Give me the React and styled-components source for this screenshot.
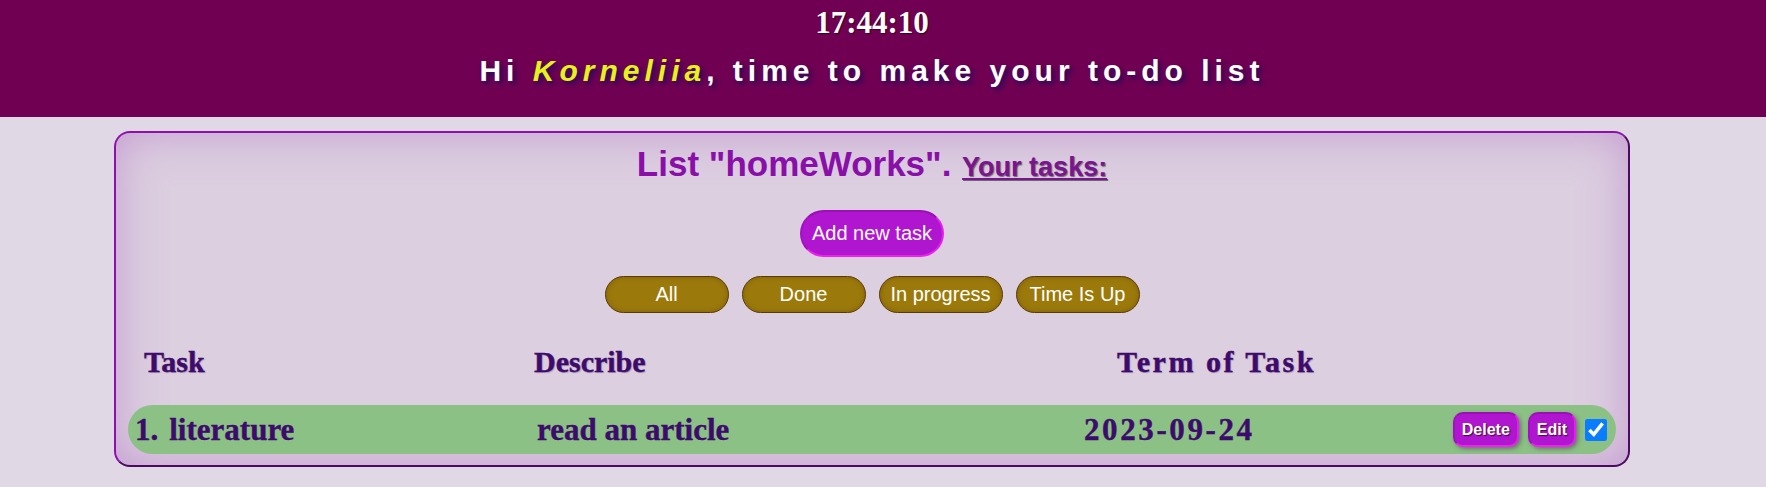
import React from "react";
import styled, { createGlobalStyle } from "styled-components";

const GlobalStyle = createGlobalStyle`
  html, body { margin: 0; padding: 0; }
  body {
    background: #e1d8e6;
    font-family: "Liberation Sans", Arial, sans-serif;
  }
`;

const Header = styled.header`
  background: #6f0052;
  height: 117px;
  box-sizing: border-box;
  padding: 6px 22px 0 0;
  display: flex;
  flex-direction: column;
  align-items: center;
`;

const Clock = styled.div`
  font-family: "Liberation Serif", "Times New Roman", serif;
  font-weight: bold;
  font-size: 31px;
  line-height: 34px;
  color: #ffffff;
  text-shadow: 1px 1px 1px #3a0020;
`;

const Greeting = styled.h2`
  margin: 13px 0 0;
  font-family: "Liberation Sans", Arial, sans-serif;
  font-weight: bold;
  font-size: 30px;
  line-height: 35px;
  letter-spacing: 5px;
  color: #ffffff;
  text-shadow: 3px 3px 4px #2b0a5c;
`;

const UserName = styled.em`
  color: #e6f21c;
  font-style: italic;
`;

const Main = styled.main`
  padding: 14px 22px 20px 0;
`;

const Panel = styled.section`
  width: 1516px;
  margin: 0 auto;
  box-sizing: border-box;
  border: 2px solid;
  border-color: #8e0fae #4b0a5f #4b0a5f #8e0fae;
  border-radius: 16px;
  background: #dccfe0;
  box-shadow: inset 0 0 45px rgba(175, 105, 195, 0.5);
  padding: 0 12px 11px 12px;
  display: flex;
  flex-direction: column;
`;

const Title = styled.h2`
  margin: 9px 0 0;
  text-align: center;
  font-family: "Liberation Sans", Arial, sans-serif;
  font-weight: bold;
  font-size: 35px;
  line-height: 44px;
  color: #8a0ea8;
`;

const TitleSub = styled.span`
  margin-left: 1px;
  font-size: 27px;
  font-weight: bold;
  color: #7a1490;
  text-decoration: underline;
  text-shadow: 1px 1px 1px #6a6a6a;
`;

const AddRow = styled.div`
  display: flex;
  justify-content: center;
  margin-top: 21px;
`;

const AddButton = styled.button`
  font-family: "Liberation Sans", Arial, sans-serif;
  font-size: 20px;
  line-height: 23px;
  color: #ffffff;
  background: #b016d0;
  border: 2px solid;
  border-color: #9a10b4 #e61ef0 #ee22f0 #a012c0;
  border-radius: 24px;
  padding: 10px 10px;
  cursor: pointer;
`;

const Filters = styled.div`
  display: flex;
  justify-content: center;
  gap: 13px;
  margin-top: 19px;
`;

const FilterButton = styled.button`
  width: 124px;
  height: 37px;
  box-sizing: border-box;
  font-family: "Liberation Sans", Arial, sans-serif;
  font-size: 20px;
  color: #ffffff;
  background: #9b7a0b;
  border: 1px solid #5a3a0a;
  border-radius: 19px;
  box-shadow: inset 0 0 5px rgba(110, 70, 0, 0.55);
  padding: 0;
  cursor: pointer;
`;

const TableHead = styled.div`
  display: grid;
  grid-template-columns: 390px 583px 1fr;
  padding-left: 16px;
  margin-top: 32px;
  font-family: "Liberation Serif", "Times New Roman", serif;
  font-weight: bold;
  font-size: 30px;
  line-height: 34px;
  color: #3d0b6b;
  -webkit-text-stroke: 0.4px #3d0b6b;
  text-shadow: 1px 1px 1px rgba(90, 60, 110, 0.35);
`;

const HeadCell = styled.div`
  letter-spacing: ${(p) => (p.$spaced ? "2.5px" : "0")};
`;

const TaskRow = styled.div`
  margin-top: 26px;
  height: 49px;
  border-radius: 25px;
  background: #8cc185;
  display: grid;
  grid-template-columns: 402px 547px 1fr auto;
  align-items: center;
  padding: 0 9px 0 7px;
  font-family: "Liberation Serif", "Times New Roman", serif;
  font-weight: bold;
  font-size: 31px;
  line-height: 34px;
  color: #3d0b6b;
  -webkit-text-stroke: 0.4px #3d0b6b;
`;

const Cell = styled.div`
  white-space: nowrap;
  letter-spacing: ${(p) => (p.$spaced ? "2.6px" : "0")};
`;

const Num = styled.span`
  margin-right: 11px;
`;

const Actions = styled.div`
  display: flex;
  align-items: center;
  gap: 9px;
  -webkit-text-stroke: 0;
`;

const SmallButton = styled.button`
  font-family: "Liberation Sans", Arial, sans-serif;
  font-weight: bold;
  font-size: 16px;
  line-height: 19px;
  color: #ffffff;
  text-shadow: 1px 1px 1px #3a1030;
  background: #b016d0;
  border: 2px solid;
  border-color: #9a10b4 #e61ef0 #f022f2 #a012c0;
  border-radius: 10px;
  padding: 6px 7px;
  box-shadow: 2px 2px 4px rgba(70, 20, 80, 0.45);
  cursor: pointer;
`;

const Check = styled.input`
  width: 22px;
  height: 22px;
  margin: 0;
  accent-color: #0a7cff;
`;

export default function App() {
  return (
    <>
      <GlobalStyle />
      <Header>
        <Clock>17:44:10</Clock>
        <Greeting>
          Hi <UserName>Korneliia</UserName>, time to make your to-do list
        </Greeting>
      </Header>
      <Main>
        <Panel>
          <Title>
            List "homeWorks". <TitleSub>Your tasks:</TitleSub>
          </Title>
          <AddRow>
            <AddButton>Add new task</AddButton>
          </AddRow>
          <Filters>
            <FilterButton>All</FilterButton>
            <FilterButton>Done</FilterButton>
            <FilterButton>In progress</FilterButton>
            <FilterButton>Time Is Up</FilterButton>
          </Filters>
          <TableHead>
            <HeadCell>Task</HeadCell>
            <HeadCell>Describe</HeadCell>
            <HeadCell $spaced>Term of Task</HeadCell>
          </TableHead>
          <TaskRow>
            <Cell>
              <Num>1.</Num>literature
            </Cell>
            <Cell>read an article</Cell>
            <Cell $spaced>2023-09-24</Cell>
            <Actions>
              <SmallButton>Delete</SmallButton>
              <SmallButton>Edit</SmallButton>
              <Check type="checkbox" defaultChecked />
            </Actions>
          </TaskRow>
        </Panel>
      </Main>
    </>
  );
}
